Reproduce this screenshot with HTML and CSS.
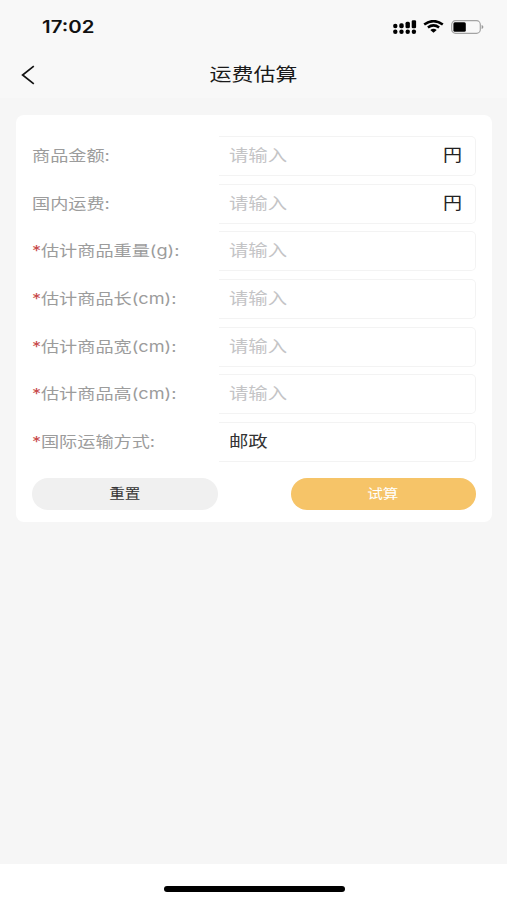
FILE: index.html
```html
<!DOCTYPE html>
<html lang="zh-CN">
<head>
  <meta charset="UTF-8">
  <meta name="viewport" content="width=device-width, initial-scale=1.0">
  <title>运费估算</title>
  <link rel="stylesheet" href="styles.css">
</head>
<body>
  <!-- Header -->
  <header class="header">
    <div class="status-bar">
      <span class="time">17:02</span>
      <div class="status-icons">
        <svg class="signal" width="24" height="14" viewBox="0 0 24 14">
          <circle cx="2.3" cy="6" r="2.2"/>
          <rect x="6.3" y="3.3" width="4.4" height="4.9" rx="1.7"/>
          <rect x="12.5" y="1.8" width="4.4" height="6.4" rx="1.5"/>
          <rect x="18.7" y="0.3" width="4.4" height="7.9" rx="1.3"/>
          <circle cx="2.3" cy="11.8" r="2.2"/>
          <circle cx="8.5" cy="11.8" r="2.2"/>
          <circle cx="14.7" cy="11.8" r="2.2"/>
          <circle cx="20.9" cy="11.8" r="2.2"/>
        </svg>
        <svg class="wifi" width="21" height="13" viewBox="0 0 21 13">
          <path d="M1.2 4.6Q10.5 -2.4 19.8 4.6M4.9 7.5Q10.5 3.2 16.1 7.5" fill="none" stroke="#000" stroke-width="2.5"/>
          <path d="M7.3 10Q10.5 7.6 13.7 10L10.5 12.8Z"/>
        </svg>
        <svg class="battery" width="33" height="14" viewBox="0 0 33 14">
          <rect x="0.7" y="0.7" width="28.6" height="12.6" rx="3.8" fill="none" stroke="#a3a3a3" stroke-width="1.2"/>
          <rect x="2.4" y="2.3" width="12.4" height="9.4" rx="1.5"/>
          <path d="M30.6 5V9Q32.4 8.6 32.4 7T30.6 5Z" fill="#999"/>
        </svg>
      </div>
    </div>
    <div class="nav-bar">
      <svg class="back" width="14" height="20" viewBox="0 0 14 20">
        <path d="M12.8 1.2L1.6 10L12.8 18.8" fill="none" stroke="#111" stroke-width="1.7"/>
      </svg>
      <h1 class="title">运费估算</h1>
    </div>
  </header>

  <!-- Estimate Form -->
  <main class="content">
    <form class="card" id="estimate-form">
      <div class="row">
        <label class="label"><span class="wide">商品金额:</span></label>
        <div class="field"><span class="placeholder wide">请输入</span><span class="unit">円</span></div>
      </div>
      <div class="row">
        <label class="label"><span class="wide">国内运费:</span></label>
        <div class="field"><span class="placeholder wide">请输入</span><span class="unit">円</span></div>
      </div>
      <div class="row">
        <label class="label"><span class="wide"><i class="required">*</i>估计商品重量(g):</span></label>
        <div class="field"><span class="placeholder wide">请输入</span></div>
      </div>
      <div class="row">
        <label class="label"><span class="wide"><i class="required">*</i>估计商品长(cm):</span></label>
        <div class="field"><span class="placeholder wide">请输入</span></div>
      </div>
      <div class="row">
        <label class="label"><span class="wide"><i class="required">*</i>估计商品宽(cm):</span></label>
        <div class="field"><span class="placeholder wide">请输入</span></div>
      </div>
      <div class="row">
        <label class="label"><span class="wide"><i class="required">*</i>估计商品高(cm):</span></label>
        <div class="field"><span class="placeholder wide">请输入</span></div>
      </div>
      <div class="row">
        <label class="label"><span class="wide"><i class="required">*</i>国际运输方式:</span></label>
        <div class="field"><span class="value wide">邮政</span></div>
      </div>
      <div class="actions">
        <button type="reset" class="button reset"><span class="button-text">重置</span></button>
        <button type="button" class="button submit"><span class="button-text">试算</span></button>
      </div>
    </form>
  </main>

  <footer class="home-area">
    <div class="home-indicator"></div>
  </footer>
</body>
</html>
```
FILE: styles.css
```css
* {
  box-sizing: border-box;
}

body {
  display: flex;
  flex-direction: column;
  height: 900px;
  margin: 0;
  background-color: #f6f6f6;
  font-family: "Liberation Sans", "Noto Sans CJK SC", sans-serif;
  color: #222;
}

.header {
  height: 98px;
  background-color: #f8f8f8;
}

.status-bar {
  display: flex;
  align-items: center;
  justify-content: space-between;
  height: 54px;
  padding: 0 23px 0 42px;
}

.time {
  font-family: Inter, sans-serif;
  font-size: 17px;
  font-weight: 600;
  line-height: 20px;
  color: #111;
  transform: scaleX(1.2);
  transform-origin: left;
}

.status-icons {
  display: flex;
  align-items: center;
}

.wifi {
  margin: 0 7px 1px 6px;
}

.nav-bar {
  display: grid;
  grid-template-columns: 14px 1fr 14px;
  align-items: center;
  height: 42px;
  padding: 0 21px;
}

.title {
  margin: 0;
  font-size: 18px;
  font-weight: 400;
  line-height: 24px;
  text-align: center;
  color: #1a1a1a;
  transform: scaleX(1.22);
}

.content {
  flex: 1;
  padding: 17px 15.5px 0 16px;
}

.card {
  padding: 17.3px 15.5px 12px 16px;
  background-color: #fff;
  border-radius: 8px;
}

.row {
  display: grid;
  grid-template-columns: 187px 1fr;
  align-items: center;
  height: 47.67px;
}

/* wide glyphs, scaled from the left edge */
.wide {
  display: inline-block;
  white-space: nowrap;
  transform: scaleX(1.21);
  transform-origin: left;
}

.label {
  font-family: Inter, "Noto Sans CJK SC", sans-serif;
  font-size: 15px;
  line-height: 20px;
  color: #9c9c9c;
}

.required {
  display: inline-block;
  width: 7.4px;
  font-style: normal;
  color: #c84a4a;
}

.field {
  display: flex;
  align-items: center;
  justify-content: space-between;
  height: 40px;
  padding: 0 13px 0 10px;
  border: 1px solid #f3f3f3;
  border-left: none;
  border-radius: 0 5px 5px 0;
  font-size: 16px;
  line-height: 22px;
}

.placeholder {
  color: #c4c4c6;
}

.value {
  color: #333;
}

.unit {
  font-size: 17px;
  transform: scaleX(1.12);
  transform-origin: right;
}

.actions {
  display: flex;
  justify-content: space-between;
  margin-top: 11.7px;
}

.button {
  width: 185.5px;
  height: 32px;
  padding: 0;
  border: none;
  border-radius: 16px;
  font-family: inherit;
  font-size: 12.8px;
  line-height: 18px;
}

.button-text {
  display: inline-block;
  transform: scaleX(1.22);
}

.reset {
  background-color: #f0f0f0;
  color: #333;
}

.submit {
  background-color: #f6c468;
  color: #fff;
}

.home-area {
  display: flex;
  justify-content: center;
  height: 36px;
  padding: 22px 0 0 1px;
  background-color: #fff;
}

.home-indicator {
  width: 181px;
  height: 6px;
  border-radius: 3px;
  background-color: #000;
}
```
